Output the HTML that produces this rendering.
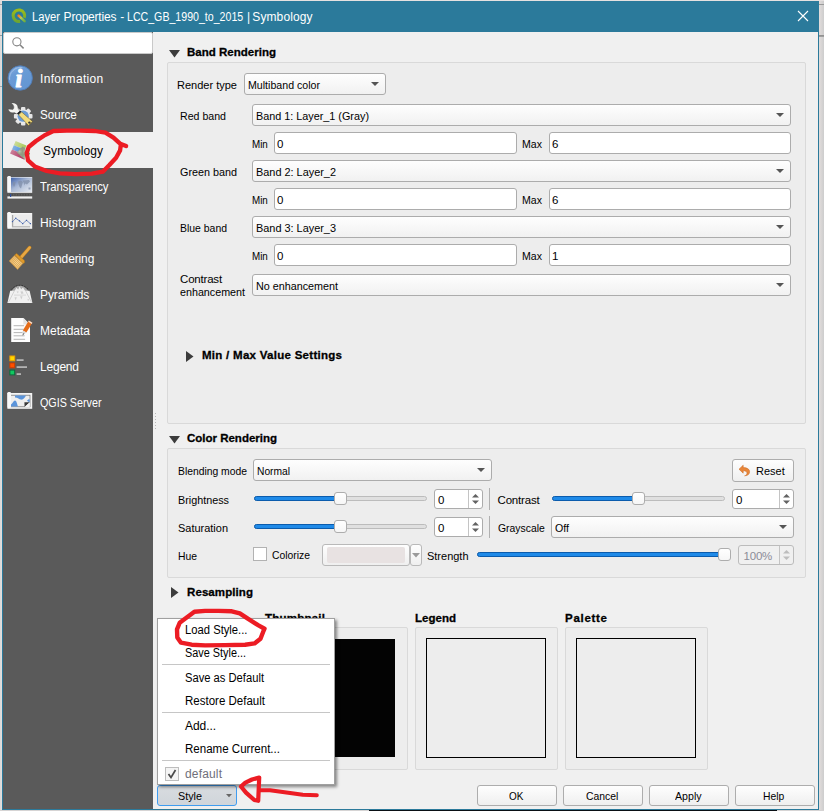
<!DOCTYPE html>
<html lang="en">
<head>
<meta charset="utf-8">
<title>Layer Properties - LCC_GB_1990_to_2015 | Symbology</title>
<style>
html,body{margin:0;padding:0;}
body{width:824px;height:811px;position:relative;overflow:hidden;background:#e4e2e2;font-family:'Liberation Sans',sans-serif;}
div,span.t,svg{position:absolute;box-sizing:border-box;}
span.t{white-space:pre;line-height:20px;height:20px;}
.combo{border:1px solid #acacac;border-radius:3px;background:linear-gradient(#fefefe,#f1f1f1);}
.combo:after{content:"";position:absolute;right:6.5px;top:50%;margin-top:-2px;border:4px solid transparent;border-top:4px solid #555;border-bottom:0;}
.inp{border:1px solid #acacac;border-radius:3px;background:#fff;}
.btn{border:1px solid #adadad;border-radius:3px;background:linear-gradient(#fefefe,#efefef);}
.grp{border:1px solid #d9d9d9;border-radius:2px;background:#ededed;}
.trk{height:5px;border:1px solid #bcbcbc;border-radius:3px;background:#e0e0e0;}
.fill{height:5px;border:1px solid #0b5cad;border-radius:3px;background:#1f8ae8;}
.hnd{width:13px;height:13px;border:1px solid #adadad;border-radius:3px;background:linear-gradient(#ffffff,#f6f6f6);}
.spin{border:1px solid #acacac;border-radius:3px;background:#fff;}
.sep{height:1px;background:#c8c8c8;}
.wg{left:0;top:0;width:0;height:0;font-size:0;}

</style>
</head>
<body>
<div style="left:0px;top:0px;width:824px;height:1px;background:#e6e1e0;"></div>
<div style="left:0px;top:1px;width:2px;height:810px;background:linear-gradient(90deg,#d8d8d8,#e6e0de);"></div>
<div style="left:819px;top:1px;width:5px;height:810px;background:linear-gradient(90deg,#e2dddc,#cdcdcd);"></div>
<div style="left:0px;top:4px;width:2px;height:1px;background:#9a9a9a;"></div>
<div style="left:819px;top:4px;width:5px;height:1px;background:#9a9a9a;"></div>
<div style="left:0px;top:35px;width:2px;height:1px;background:#9a9a9a;"></div>
<div style="left:819px;top:35px;width:5px;height:2px;background:linear-gradient(#8c8c8c,#a4a4a4);"></div>
<div style="left:0px;top:86px;width:2px;height:1px;background:#a8a8a8;"></div>
<div style="left:0px;top:810px;width:824px;height:1px;background:#d6d4d4;"></div>
<div style="left:369px;top:810px;width:408px;height:1px;background:#0a0f14;"></div>
<div style="left:2px;top:1px;width:817px;height:809px;background:#f0f0f0;border:1px solid #2b7a9b;"></div>
<div style="left:2px;top:1px;width:817px;height:31px;background:#2b7a9b;"></div>
<div class="wg"><span class="t" style="left:32.4px;top:7px;font-size:12px;color:#fff;transform:scaleX(0.9324);transform-origin:0 0;">Layer</span> <span class="t" style="left:63.6px;top:7px;font-size:12px;color:#fff;letter-spacing:-0.211px;">Properties</span> <span class="t" style="left:120.2px;top:7px;font-size:12px;color:#fff;">-</span> <span class="t" style="left:127.3px;top:7px;font-size:12px;color:#fff;transform:scaleX(0.8841);transform-origin:0 0;">LCC_GB_1990_to_2015</span> <span class="t" style="left:247px;top:7px;font-size:12px;color:#fff;">|</span> <span class="t" style="left:252.3px;top:7px;font-size:12px;color:#fff;letter-spacing:0.103px;">Symbology</span></div>
<svg style="left:797px;top:10px" width="12" height="12" viewBox="0 0 12 12"><path d="M1 1L11 11M11 1L1 11" stroke="#fff" stroke-width="1.1" fill="none"/></svg>
<svg style="left:0px;top:0px" width="40" height="32" viewBox="0 0 40 32"><defs><linearGradient id="gq" x1="0" y1="0" x2="0" y2="1"><stop offset="0" stop-color="#9cbb1a"/><stop offset="1" stop-color="#6ea531"/></linearGradient><linearGradient id="gp" gradientUnits="userSpaceOnUse" x1="18" y1="15" x2="25.5" y2="22"><stop offset="0" stop-color="#ff7410"/><stop offset="0.22" stop-color="#f39228"/><stop offset="0.4" stop-color="#c3cc52"/><stop offset="0.6" stop-color="#8fbf4a"/><stop offset="1" stop-color="#68a83c"/></linearGradient></defs><path d="M24.3 17.9A5.8 5.8 0 1 0 20.1 21.4" fill="none" stroke="url(#gq)" stroke-width="3"/><path d="M18.6 15.6L24.6 21.1" stroke="url(#gp)" stroke-width="2.6" stroke-linecap="round"/></svg>
<div style="left:3px;top:32px;width:150px;height:777px;background:#5a5a5a;"></div>
<div style="left:3px;top:32px;width:150px;height:22px;background:#fff;border:1px solid #c9c9c9;border-radius:2px;"></div>
<svg style="left:11px;top:36px" width="14" height="14" viewBox="0 0 14 14"><circle cx="5.9" cy="5.8" r="4.1" stroke="#858585" stroke-width="1.1" fill="none"/><path d="M8.9 8.8L12.6 12.4" stroke="#858585" stroke-width="1.5" fill="none"/></svg>
<span class="t" style="left:40px;top:69px;font-size:12px;color:#fff;letter-spacing:0.317px;">Information</span>
<svg style="left:0px;top:60px" width="40" height="36" viewBox="0 0 40 36"><defs><linearGradient id="gi" x1="0" y1="0" x2="0.6" y2="1"><stop offset="0" stop-color="#8db4e2"/><stop offset="0.35" stop-color="#6b9cd6"/><stop offset="1" stop-color="#6496d2"/></linearGradient></defs><circle cx="20.2" cy="18" r="12.2" fill="url(#gi)" stroke="#4f7db8" stroke-width="0.9"/><path d="M9.6 19.5A10.6 10.6 0 0 1 22 7.6" fill="none" stroke="#a9c6ea" stroke-width="1" stroke-linecap="round" opacity="0.8"/><text x="15.2" y="26.6" font-family="'Liberation Serif',serif" font-style="italic" font-weight="bold" font-size="25.5" fill="#fff" stroke="#fff" stroke-width="0.9" stroke-linejoin="round">i</text></svg>
<span class="t" style="left:40px;top:105px;font-size:12px;color:#fff;transform:scaleX(0.9676);transform-origin:0 0;">Source</span>
<svg style="left:0px;top:96px" width="40" height="36" viewBox="0 0 40 36"><g transform="translate(23.2,20.2)"><rect x="-2.2" y="-9.3" width="4.4" height="5" rx="1" fill="#e6e6e6" transform="rotate(0)"/><rect x="-2.2" y="-9.3" width="4.4" height="5" rx="1" fill="#e6e6e6" transform="rotate(45)"/><rect x="-2.2" y="-9.3" width="4.4" height="5" rx="1" fill="#e6e6e6" transform="rotate(90)"/><rect x="-2.2" y="-9.3" width="4.4" height="5" rx="1" fill="#e6e6e6" transform="rotate(135)"/><rect x="-2.2" y="-9.3" width="4.4" height="5" rx="1" fill="#e6e6e6" transform="rotate(180)"/><rect x="-2.2" y="-9.3" width="4.4" height="5" rx="1" fill="#e6e6e6" transform="rotate(225)"/><rect x="-2.2" y="-9.3" width="4.4" height="5" rx="1" fill="#e6e6e6" transform="rotate(270)"/><rect x="-2.2" y="-9.3" width="4.4" height="5" rx="1" fill="#e6e6e6" transform="rotate(315)"/><circle r="7" fill="#e9e9e9"/><circle r="5.6" fill="#6b9cd6"/></g><path d="M11.2 7.2C15 6 18.2 8.6 18 12.2L19.8 15.4L17.2 18L14.2 16.6C11.2 17.6 8.6 15.6 8.2 13L12.8 13.6C14.6 12 14.2 9 11.2 7.2Z" fill="#f4f4f2" stroke="#4a4a4a" stroke-width="0.4"/><path d="M17 17.4L20.2 14.6L21.4 15.8L18.4 18.8Z" fill="#1f1f1f"/><path d="M18.6 18.9L21.6 15.9L32.4 25.4L28.6 29.6Z" fill="#f3dc7c" stroke="#6b5a1e" stroke-width="0.5"/><circle cx="29.4" cy="26.6" r="1.2" fill="#3a3a3a"/></svg>
<div style="left:3px;top:132px;width:151px;height:36px;background:#f0f0f0;"></div>
<span class="t" style="left:43px;top:141px;font-size:12px;color:#000;letter-spacing:0.078px;">Symbology</span>
<svg style="left:0px;top:132px" width="40" height="36" viewBox="0 0 40 36"><defs><pattern id="hx" width="1.2" height="1.2" patternUnits="userSpaceOnUse"><rect width="1.2" height="1.2" fill="#8f9a80"/><rect width="0.6" height="0.6" fill="#b9c0ad"/></pattern><linearGradient id="sg" x1="0" y1="0" x2="1" y2="0.4"><stop offset="0" stop-color="#d3dfa0"/><stop offset="1" stop-color="#a9c95c"/></linearGradient><linearGradient id="sb" x1="0" y1="0" x2="1" y2="0.4"><stop offset="0" stop-color="#8fb8e6"/><stop offset="1" stop-color="#4a8fd8"/></linearGradient><linearGradient id="sp" x1="0" y1="0" x2="1" y2="0.4"><stop offset="0" stop-color="#cf8aa2"/><stop offset="1" stop-color="#b03a64"/></linearGradient></defs><path d="M15.6 9L26.4 13.6L24.8 17.8L13.8 13.2Z" fill="url(#sg)"/><path d="M13.8 13.2L24.8 17.8L23.4 22.2L12 17.6Z" fill="url(#sb)"/><path d="M12 17.6L23.4 22.2L24.6 27.8L10 21.4Z" fill="url(#sp)"/><path d="M22.4 14.4L25.2 15.6L25 27.8L16.8 20.6Z" fill="url(#hx)"/><path d="M28.4 19.6L30 21.4L29.4 23.2Z" fill="#7a8a4a"/></svg>
<span class="t" style="left:40px;top:177px;font-size:12px;color:#fff;transform:scaleX(0.9394);transform-origin:0 0;">Transparency</span>
<svg style="left:0px;top:168px" width="40" height="36" viewBox="0 0 40 36"><defs><linearGradient id="gt" x1="0" y1="0" x2="1" y2="1"><stop offset="0" stop-color="#3f62ab"/><stop offset="0.45" stop-color="#a9b9d6"/><stop offset="1" stop-color="#e9edf2"/></linearGradient></defs><rect x="7.4" y="9" width="24.8" height="15.8" fill="#f4f4f4"/><rect x="11" y="9.6" width="21" height="14.6" fill="url(#gt)"/><rect x="7.4" y="8" width="3.6" height="16" rx="1.2" fill="#f7f7f7"/><path d="M18 13.5L21 12.5L23 14L22 17L21 20.5L19.5 19L18.5 16Z M13 14L15.5 14L15 17L14 19L12.8 16.5Z M22.5 12.5L29 12L30 13.5L27 16.5L25 15.5L24.5 17.5L23.5 14.5Z M28.5 19.5L30.5 19.5L30.5 21.5L28.5 21.5Z" fill="#7f8ea8" opacity="0.75"/><rect x="7.4" y="26" width="24.8" height="1.6" fill="#4a4a4a"/><rect x="8.2" y="26.2" width="0.8" height="1.2" fill="#6c6c6c"/><rect x="9.799999999999999" y="26.2" width="0.8" height="1.2" fill="#6c6c6c"/><rect x="11.399999999999999" y="26.2" width="0.8" height="1.2" fill="#6c6c6c"/><rect x="13.0" y="26.2" width="0.8" height="1.2" fill="#6c6c6c"/><rect x="14.6" y="26.2" width="0.8" height="1.2" fill="#6c6c6c"/><rect x="16.2" y="26.2" width="0.8" height="1.2" fill="#6c6c6c"/><rect x="17.8" y="26.2" width="0.8" height="1.2" fill="#6c6c6c"/><rect x="19.4" y="26.2" width="0.8" height="1.2" fill="#6c6c6c"/><rect x="21.0" y="26.2" width="0.8" height="1.2" fill="#6c6c6c"/><rect x="22.6" y="26.2" width="0.8" height="1.2" fill="#6c6c6c"/><rect x="24.2" y="26.2" width="0.8" height="1.2" fill="#6c6c6c"/><rect x="25.8" y="26.2" width="0.8" height="1.2" fill="#6c6c6c"/><rect x="27.400000000000002" y="26.2" width="0.8" height="1.2" fill="#6c6c6c"/><rect x="29.0" y="26.2" width="0.8" height="1.2" fill="#6c6c6c"/><rect x="30.6" y="26.2" width="0.8" height="1.2" fill="#6c6c6c"/><rect x="7.4" y="28.4" width="24.8" height="2.2" fill="#f0f0f0"/><rect x="10" y="26" width="1.2" height="3" fill="#2b4fa0"/></svg>
<span class="t" style="left:40px;top:213px;font-size:12px;color:#fff;letter-spacing:0.202px;">Histogram</span>
<svg style="left:0px;top:204px" width="40" height="36" viewBox="0 0 40 36"><rect x="7.4" y="9" width="24.8" height="15.8" fill="#f4f4f4"/><rect x="11.4" y="10.4" width="20.2" height="12.8" fill="#ececec"/><rect x="7.4" y="8" width="3.6" height="16" rx="1.2" fill="#f8f8f8"/><rect x="12" y="11" width="1.2" height="12" fill="#a9a9a9"/><rect x="12" y="22.2" width="18" height="1.2" fill="#b4b4b4"/><path d="M12.5 17.6L15.7 14.3L19.5 16.9L22.7 19.6L26.5 16.4L30.4 19.6" fill="none" stroke="#4d6cb0" stroke-width="0.7"/><rect x="11.9" y="17.0" width="1.2" height="1.2" fill="#3f5ea8"/><rect x="15.1" y="13.700000000000001" width="1.2" height="1.2" fill="#3f5ea8"/><rect x="18.9" y="16.299999999999997" width="1.2" height="1.2" fill="#3f5ea8"/><rect x="22.099999999999998" y="19.0" width="1.2" height="1.2" fill="#3f5ea8"/><rect x="25.9" y="15.799999999999999" width="1.2" height="1.2" fill="#3f5ea8"/><rect x="29.799999999999997" y="19.0" width="1.2" height="1.2" fill="#3f5ea8"/></svg>
<span class="t" style="left:40px;top:249px;font-size:12px;color:#fff;letter-spacing:-0.134px;">Rendering</span>
<svg style="left:0px;top:240px" width="40" height="36" viewBox="0 0 40 36"><defs><pattern id="hb" width="1.3" height="1.3" patternUnits="userSpaceOnUse" patternTransform="rotate(45)"><rect width="1.3" height="1.3" fill="#e2ab55"/><rect width="0.7" height="0.7" fill="#f4d9a0"/></pattern></defs><path d="M29.6 7.6L21.6 16.8" stroke="#b57a1e" stroke-width="3.6" stroke-linecap="round"/><path d="M29.6 7.6L21.6 16.8" stroke="#e8a844" stroke-width="2.6" stroke-linecap="round"/><path d="M14.6 15L16.6 13.4L24.4 20.4L24.6 22.6L23 23.4Z" fill="#e09a2a" stroke="#b07618" stroke-width="0.5"/><path d="M14.4 15.4L23 23.2L17.6 29.6L9.2 21Z" fill="url(#hb)" stroke="#c98f34" stroke-width="0.5"/></svg>
<span class="t" style="left:40px;top:285px;font-size:12px;color:#fff;letter-spacing:-0.102px;">Pyramids</span>
<svg style="left:0px;top:276px" width="40" height="36" viewBox="0 0 40 36"><path d="M11.6 14.9C13.6 11.6 16.8 9.7 19.8 9.7C22.8 9.7 26 11.6 28.2 14.9Z" fill="#a9a9a9"/><path d="M11.2 13.6C13.6 10.8 16.8 9.2 19.8 9.2C22.8 9.2 26 10.8 28.6 13.6" fill="none" stroke="#2b2b2b" stroke-width="0.8" stroke-dasharray="1.6 1.3"/><path d="M14.6 14.9L16.4 11.8L18.2 13.4L19.6 10.6L21.2 13.2L23 11.6L25.2 14.9Z" fill="#ededed"/><path d="M10.2 14.8L29.6 14.8L32.4 27L7.4 27Z" fill="#f1f1f1"/><path d="M14 19.1L26 19.1" stroke="#cfcfcf" stroke-width="0.8"/><path d="M14.4 14.8L8.4 26.4M25.6 14.8L31.6 26.4" stroke="#c4c4c4" stroke-width="0.7" fill="none"/><path d="M16.6 15.4L18.6 15.2L18 17.6ZM20.4 15.6L22.6 15.2L23.6 17.4L21.4 18ZM14.5 21.2L16.8 21.2L15.6 24.6ZM20 20.2L22.6 20.2L21.4 23.6ZM27.4 22.8L29.2 23.4L28 25.2Z" fill="#cfcfcf"/></svg>
<span class="t" style="left:40px;top:321px;font-size:12px;color:#fff;letter-spacing:-0.007px;">Metadata</span>
<svg style="left:0px;top:312px" width="40" height="36" viewBox="0 0 40 36"><path d="M11.2 6H23.4L30 12.6V30H11.2Z" fill="#fdfdfd"/><path d="M23.4 6V12.6H30Z" fill="#e4e4e4"/><rect x="13.6" y="13.2" width="10.5" height="1" fill="#b5b5b5"/><rect x="13.6" y="16.8" width="10" height="1" fill="#b5b5b5"/><rect x="13.6" y="20.1" width="9" height="1" fill="#b5b5b5"/><rect x="13.6" y="23.3" width="11" height="1" fill="#b5b5b5"/><rect x="13.6" y="26.8" width="11.5" height="1" fill="#b5b5b5"/><path d="M28.8 8.6L32.4 10.8L26.4 20.6L22.8 18.4Z" fill="#e56d1a"/><path d="M28.8 8.6L32.4 10.8L31.8 11.9L28.2 9.7Z" fill="#f3e3d6"/><path d="M22.8 18.4L26.4 20.6L22.2 23.8Z" fill="#d8d8d8"/><path d="M23.4 21.2L24.4 21.8L22.2 23.8Z" fill="#4a4a4a"/></svg>
<span class="t" style="left:40px;top:357px;font-size:12px;color:#fff;letter-spacing:-0.209px;">Legend</span>
<svg style="left:0px;top:348px" width="40" height="36" viewBox="0 0 40 36"><rect x="9.9" y="8" width="4.8" height="4.8" fill="#ffd800" stroke="#f0a000" stroke-width="1"/><rect x="9.9" y="15" width="4.8" height="4.8" fill="#ff5000" stroke="#cc3c00" stroke-width="1"/><rect x="9.9" y="22.1" width="4.8" height="4.8" fill="#10c860" stroke="#0d6a3c" stroke-width="1"/><rect x="16.6" y="11.2" width="7" height="1.8" fill="#b3b3b3"/><rect x="16.6" y="18.2" width="10.4" height="1.8" fill="#b3b3b3"/><rect x="16.6" y="25.2" width="4.4" height="1.8" fill="#b3b3b3"/></svg>
<span class="t" style="left:40px;top:393px;font-size:12px;color:#fff;transform:scaleX(0.8954);transform-origin:0 0;">QGIS Server</span>
<svg style="left:0px;top:384px" width="40" height="36" viewBox="0 0 40 36"><rect x="7.4" y="9" width="24.8" height="15.8" fill="#f4f4f4"/><rect x="10.6" y="11.2" width="19.4" height="11.6" fill="#eeeeee" stroke="#6a6a6a" stroke-width="0.7"/><path d="M15 11.6H26C25 14 23 16 21 15.6C19 15.2 18 13.6 15 13.4Z" fill="#5b94da"/><path d="M11 22.4V20.6C12.6 19.6 13.4 16.6 15 16.6C16.8 16.6 17 20.4 18 22.4Z" fill="#5b94da"/><path d="M27 16.8C27.6 15.4 28.8 15 29.6 15.2V18.6Z" fill="#5b94da"/><path d="M24.4 18.2L29.8 18.2L24.6 23Z" fill="#3a3a3a"/><path d="M29.8 18.2V23H24.6Z" fill="#f4f4f4"/><rect x="7.4" y="8" width="3.6" height="16" rx="1.2" fill="#f8f8f8"/></svg>
<div style="left:155px;top:413px;width:1px;height:1px;background:#b8b8b8;"></div>
<div style="left:155px;top:416px;width:1px;height:1px;background:#b8b8b8;"></div>
<div style="left:155px;top:419px;width:1px;height:1px;background:#b8b8b8;"></div>
<div style="left:155px;top:422px;width:1px;height:1px;background:#b8b8b8;"></div>
<div style="left:155px;top:425px;width:1px;height:1px;background:#b8b8b8;"></div>
<div style="left:155px;top:428px;width:1px;height:1px;background:#b8b8b8;"></div>
<svg style="left:168.5px;top:50px" width="11" height="8" viewBox="0 0 11 8"><path d="M0 0H11L5.5 7.5Z" fill="#3c3c3c"/></svg>
<span class="t" style="left:187px;top:42px;font-size:11.5px;color:#000;font-weight:700;letter-spacing:0.014px;-webkit-text-stroke:0.3px #000;">Band Rendering</span>
<div class="grp" style="left:167px;top:62px;width:639px;height:362px;"></div>
<span class="t" style="left:177px;top:75px;font-size:11.5px;color:#000;transform:scaleX(0.9576);transform-origin:0 0;">Render type</span>
<div class="combo" style="left:244px;top:73px;width:142px;height:22px;"></div>
<span class="t" style="left:248px;top:75px;font-size:11.5px;color:#000;transform:scaleX(0.9233);transform-origin:0 0;">Multiband color</span>
<span class="t" style="left:180.2px;top:106px;font-size:11.5px;color:#000;transform:scaleX(0.9223);transform-origin:0 0;">Red band</span>
<div class="combo" style="left:252px;top:104px;width:539px;height:22px;"></div>
<span class="t" style="left:256px;top:106px;font-size:11.5px;color:#000;transform:scaleX(0.9403);transform-origin:0 0;">Band 1: Layer_1 (Gray)</span>
<span class="t" style="left:251.7px;top:134px;font-size:11.5px;color:#000;transform:scaleX(0.8526);transform-origin:0 0;">Min</span>
<div class="inp" style="left:274px;top:132px;width:243px;height:22px;"></div>
<span class="t" style="left:277px;top:134px;font-size:11.5px;color:#000;">0</span>
<span class="t" style="left:522px;top:134px;font-size:11.5px;color:#000;transform:scaleX(0.9202);transform-origin:0 0;">Max</span>
<div class="inp" style="left:549px;top:132px;width:242px;height:22px;"></div>
<span class="t" style="left:552px;top:134px;font-size:11.5px;color:#000;">6</span>
<span class="t" style="left:180.2px;top:162px;font-size:11.5px;color:#000;transform:scaleX(0.9383);transform-origin:0 0;">Green band</span>
<div class="combo" style="left:252px;top:160px;width:539px;height:22px;"></div>
<span class="t" style="left:256px;top:162px;font-size:11.5px;color:#000;transform:scaleX(0.9478);transform-origin:0 0;">Band 2: Layer_2</span>
<span class="t" style="left:251.7px;top:190px;font-size:11.5px;color:#000;transform:scaleX(0.8526);transform-origin:0 0;">Min</span>
<div class="inp" style="left:274px;top:188px;width:243px;height:22px;"></div>
<span class="t" style="left:277px;top:190px;font-size:11.5px;color:#000;">0</span>
<span class="t" style="left:522px;top:190px;font-size:11.5px;color:#000;transform:scaleX(0.9202);transform-origin:0 0;">Max</span>
<div class="inp" style="left:549px;top:188px;width:242px;height:22px;"></div>
<span class="t" style="left:552px;top:190px;font-size:11.5px;color:#000;">6</span>
<span class="t" style="left:180.2px;top:218px;font-size:11.5px;color:#000;transform:scaleX(0.9074);transform-origin:0 0;">Blue band</span>
<div class="combo" style="left:252px;top:216px;width:539px;height:22px;"></div>
<span class="t" style="left:256px;top:218px;font-size:11.5px;color:#000;transform:scaleX(0.9478);transform-origin:0 0;">Band 3: Layer_3</span>
<span class="t" style="left:251.7px;top:246px;font-size:11.5px;color:#000;transform:scaleX(0.8526);transform-origin:0 0;">Min</span>
<div class="inp" style="left:274px;top:244px;width:243px;height:22px;"></div>
<span class="t" style="left:277px;top:246px;font-size:11.5px;color:#000;">0</span>
<span class="t" style="left:522px;top:246px;font-size:11.5px;color:#000;transform:scaleX(0.9202);transform-origin:0 0;">Max</span>
<div class="inp" style="left:549px;top:244px;width:242px;height:22px;"></div>
<span class="t" style="left:552px;top:246px;font-size:11.5px;color:#000;">1</span>
<span class="t" style="left:180.1px;top:269px;font-size:11.5px;color:#000;letter-spacing:-0.21px;">Contrast</span>
<span class="t" style="left:180.1px;top:282px;font-size:11.5px;color:#000;transform:scaleX(0.9325);transform-origin:0 0;">enhancement</span>
<div class="combo" style="left:252px;top:274px;width:539px;height:22px;"></div>
<span class="t" style="left:256px;top:276px;font-size:11.5px;color:#000;transform:scaleX(0.9361);transform-origin:0 0;">No enhancement</span>
<svg style="left:186px;top:351px" width="8" height="11" viewBox="0 0 8 11"><path d="M0 0V11L7.5 5.5Z" fill="#3c3c3c"/></svg>
<span class="t" style="left:202px;top:345px;font-size:11.5px;color:#000;font-weight:700;letter-spacing:0.28px;-webkit-text-stroke:0.3px #000;">Min / Max Value Settings</span>
<svg style="left:168.5px;top:436px" width="11" height="8" viewBox="0 0 11 8"><path d="M0 0H11L5.5 7.5Z" fill="#3c3c3c"/></svg>
<span class="t" style="left:187px;top:428px;font-size:11.5px;color:#000;font-weight:700;letter-spacing:-0.007px;-webkit-text-stroke:0.3px #000;">Color Rendering</span>
<div class="grp" style="left:167px;top:448px;width:639px;height:130px;"></div>
<span class="t" style="left:177.5px;top:461px;font-size:11.5px;color:#000;transform:scaleX(0.8992);transform-origin:0 0;">Blending mode</span>
<div class="combo" style="left:253px;top:459px;width:239px;height:22px;"></div>
<span class="t" style="left:257px;top:461px;font-size:11.5px;color:#000;transform:scaleX(0.8904);transform-origin:0 0;">Normal</span>
<div class="btn" style="left:732px;top:459px;width:62px;height:23px;"></div>
<svg style="left:738px;top:464px" width="13" height="13" viewBox="0 0 13 13"><path d="M5.2 1.2L1 5.2L5.2 9.2V6.8C7.6 6.6 9 7.6 9 9.2C9 10.4 8.2 11.4 6.6 11.8C10 11.8 11.6 10 11.6 7.8C11.6 5.4 9.4 3.6 5.2 3.6Z" fill="#e8863a" stroke="#c9651c" stroke-width="0.5"/></svg>
<span class="t" style="left:756.3px;top:461px;font-size:11.5px;color:#000;transform:scaleX(0.9552);transform-origin:0 0;">Reset</span>
<span class="t" style="left:177.5px;top:490px;font-size:11.5px;color:#000;transform:scaleX(0.9385);transform-origin:0 0;">Brightness</span>
<div class="trk" style="left:254px;top:496px;width:173px;height:5px;"></div>
<div class="fill" style="left:254px;top:496px;width:83px;height:5px;"></div>
<div class="hnd" style="left:334px;top:492px;width:13px;height:13px;"></div>
<div class="spin" style="left:434px;top:489px;width:49px;height:20px;"></div>
<span class="t" style="left:438px;top:490px;font-size:11.5px;color:#000;">0</span>
<div style="left:468px;top:490px;width:1px;height:18px;background:#c4c4c4;"></div>
<svg style="left:471px;top:493px" width="9" height="12" viewBox="0 0 9 12"><path d="M1 4.6L4.5 0.9L8 4.6Z" fill="#626262"/><path d="M1 7.4L4.5 11.1L8 7.4Z" fill="#626262"/></svg>
<div style="left:489px;top:488px;width:1px;height:22px;background:#b0b0b0;"></div>
<span class="t" style="left:497.5px;top:490px;font-size:11.5px;color:#000;letter-spacing:-0.167px;">Contrast</span>
<div class="trk" style="left:552px;top:496px;width:173px;height:5px;"></div>
<div class="fill" style="left:552px;top:496px;width:83px;height:5px;"></div>
<div class="hnd" style="left:632px;top:492px;width:13px;height:13px;"></div>
<div class="spin" style="left:732px;top:489px;width:62px;height:20px;"></div>
<span class="t" style="left:736px;top:490px;font-size:11.5px;color:#000;">0</span>
<div style="left:779px;top:490px;width:1px;height:18px;background:#c4c4c4;"></div>
<svg style="left:782px;top:493px" width="9" height="12" viewBox="0 0 9 12"><path d="M1 4.6L4.5 0.9L8 4.6Z" fill="#626262"/><path d="M1 7.4L4.5 11.1L8 7.4Z" fill="#626262"/></svg>
<span class="t" style="left:177.5px;top:518px;font-size:11.5px;color:#000;transform:scaleX(0.9535);transform-origin:0 0;">Saturation</span>
<div class="trk" style="left:254px;top:524px;width:173px;height:5px;"></div>
<div class="fill" style="left:254px;top:524px;width:83px;height:5px;"></div>
<div class="hnd" style="left:334px;top:520px;width:13px;height:13px;"></div>
<div class="spin" style="left:434px;top:517px;width:49px;height:20px;"></div>
<span class="t" style="left:438px;top:518px;font-size:11.5px;color:#000;">0</span>
<div style="left:468px;top:518px;width:1px;height:18px;background:#c4c4c4;"></div>
<svg style="left:471px;top:521px" width="9" height="12" viewBox="0 0 9 12"><path d="M1 4.6L4.5 0.9L8 4.6Z" fill="#626262"/><path d="M1 7.4L4.5 11.1L8 7.4Z" fill="#626262"/></svg>
<div style="left:489px;top:516px;width:1px;height:22px;background:#b0b0b0;"></div>
<span class="t" style="left:497.5px;top:518px;font-size:11.5px;color:#000;transform:scaleX(0.9038);transform-origin:0 0;">Grayscale</span>
<div class="combo" style="left:551px;top:516px;width:243px;height:22px;"></div>
<span class="t" style="left:555px;top:518px;font-size:11.5px;color:#000;transform:scaleX(0.9247);transform-origin:0 0;">Off</span>
<span class="t" style="left:177.5px;top:546px;font-size:11.5px;color:#000;transform:scaleX(0.9001);transform-origin:0 0;">Hue</span>
<div style="left:253px;top:547px;width:14px;height:14px;background:#fff;border:1px solid #b2b2b2;"></div>
<span class="t" style="left:271.5px;top:545.2px;font-size:11.5px;color:#000;transform:scaleX(0.9007);transform-origin:0 0;">Colorize</span>
<div class="btn" style="left:322px;top:544px;width:88px;height:22px;border-color:#b9b9b9;"></div>
<div style="left:327px;top:547px;width:78px;height:16px;background:#e8e2e2;border-radius:2px;"></div>
<div class="btn" style="left:410px;top:544px;width:12px;height:22px;border-color:#b9b9b9;"></div>
<svg style="left:412px;top:553px" width="8" height="5" viewBox="0 0 8 5"><path d="M0 0H8L4 4.5Z" fill="#9a9a9a"/></svg>
<span class="t" style="left:427.2px;top:546px;font-size:11.5px;color:#000;transform:scaleX(0.9544);transform-origin:0 0;">Strength</span>
<div class="trk" style="left:477px;top:552px;width:254px;height:5px;"></div>
<div class="fill" style="left:477px;top:552px;width:244px;height:5px;"></div>
<div class="hnd" style="left:718px;top:548px;width:13px;height:13px;"></div>
<div class="spin" style="left:738px;top:545px;width:56px;height:20px;background:#f0f0f0;border-color:#bcbcbc;"></div>
<span class="t" style="left:743.5px;top:546px;font-size:11.5px;color:#8c8c98;letter-spacing:-0.207px;">100%</span>
<div style="left:779px;top:546px;width:1px;height:18px;background:#c4c4c4;"></div>
<svg style="left:782px;top:549px" width="9" height="12" viewBox="0 0 9 12"><path d="M1 4.6L4.5 0.9L8 4.6Z" fill="#bdbdbd"/><path d="M1 7.4L4.5 11.1L8 7.4Z" fill="#bdbdbd"/></svg>
<svg style="left:171px;top:587px" width="8" height="11" viewBox="0 0 8 11"><path d="M0 0V11L7.5 5.5Z" fill="#3c3c3c"/></svg>
<span class="t" style="left:187px;top:582px;font-size:11.5px;color:#000;font-weight:700;letter-spacing:0.09px;-webkit-text-stroke:0.3px #000;">Resampling</span>
<span class="t" style="left:265px;top:608px;font-size:11.5px;color:#000;font-weight:700;letter-spacing:0.232px;-webkit-text-stroke:0.3px #000;">Thumbnail</span>
<span class="t" style="left:415px;top:608px;font-size:11.5px;color:#000;font-weight:700;letter-spacing:0.022px;-webkit-text-stroke:0.3px #000;">Legend</span>
<span class="t" style="left:565px;top:608px;font-size:11.5px;color:#000;font-weight:700;letter-spacing:0.714px;-webkit-text-stroke:0.3px #000;">Palette</span>
<div class="grp" style="left:265px;top:627px;width:143px;height:143px;"></div>
<div style="left:277px;top:639px;width:118px;height:118px;background:#030303;"></div>
<div class="grp" style="left:415px;top:627px;width:143px;height:143px;"></div>
<div style="left:426px;top:638px;width:120px;height:120px;border:1px solid #000;background:#ededed;"></div>
<div class="grp" style="left:565px;top:627px;width:143px;height:143px;"></div>
<div style="left:576px;top:638px;width:120px;height:120px;border:1px solid #000;background:#ededed;"></div>
<div class="btn" style="left:477px;top:785px;width:80px;height:21px;"></div>
<span class="t" style="left:509.3px;top:786px;font-size:11.5px;color:#000;transform:scaleX(0.8662);transform-origin:0 0;">OK</span>
<div class="btn" style="left:563px;top:785px;width:80px;height:21px;"></div>
<span class="t" style="left:586.3px;top:786px;font-size:11.5px;color:#000;transform:scaleX(0.9019);transform-origin:0 0;">Cancel</span>
<div class="btn" style="left:649px;top:785px;width:80px;height:21px;"></div>
<span class="t" style="left:674.6px;top:786px;font-size:11.5px;color:#000;transform:scaleX(0.9242);transform-origin:0 0;">Apply</span>
<div class="btn" style="left:735px;top:785px;width:80px;height:21px;"></div>
<span class="t" style="left:762.8px;top:786px;font-size:11.5px;color:#000;transform:scaleX(0.9004);transform-origin:0 0;">Help</span>
<div style="left:157px;top:785px;width:80px;height:21px;border:1px solid #3f9cf0;border-radius:3px;background:linear-gradient(#d8dce0,#d0d5da);"></div>
<span class="t" style="left:178px;top:786px;font-size:11.5px;color:#000;transform:scaleX(0.9383);transform-origin:0 0;">Style</span>
<svg style="left:226px;top:794px" width="6" height="4" viewBox="0 0 6 4"><path d="M0 0H6L3 3.2Z" fill="#666"/></svg>
<div style="left:157px;top:618px;width:178px;height:167px;background:#fff;border:1px solid #a0a0a0;box-shadow:2px 2px 3px rgba(0,0,0,0.45);"></div>
<span class="t" style="left:185px;top:620px;font-size:12px;color:#000;transform:scaleX(0.9368);transform-origin:0 0;">Load Style...</span>
<span class="t" style="left:185px;top:643px;font-size:12px;color:#000;transform:scaleX(0.9054);transform-origin:0 0;">Save Style...</span>
<span class="t" style="left:185px;top:668px;font-size:12px;color:#000;transform:scaleX(0.9325);transform-origin:0 0;">Save as Default</span>
<span class="t" style="left:185px;top:691px;font-size:12px;color:#000;transform:scaleX(0.9595);transform-origin:0 0;">Restore Default</span>
<span class="t" style="left:185px;top:716px;font-size:12px;color:#000;letter-spacing:-0.072px;">Add...</span>
<span class="t" style="left:185px;top:739px;font-size:12px;color:#000;transform:scaleX(0.9623);transform-origin:0 0;">Rename Current...</span>
<div style="left:162px;top:664px;width:168px;height:1px;background:#c6c6c6;"></div>
<div style="left:162px;top:712px;width:168px;height:1px;background:#c6c6c6;"></div>
<div style="left:162px;top:760px;width:168px;height:1px;background:#c6c6c6;"></div>
<div style="left:165px;top:767px;width:14px;height:14px;background:#f4f4f4;border:1px solid #bdbdbd;"></div>
<svg style="left:167px;top:769px" width="10" height="10" viewBox="0 0 10 10"><path d="M1.5 5L4 8.5L8.5 1" stroke="#4a4a4a" stroke-width="1.7" fill="none"/></svg>
<span class="t" style="left:185px;top:764px;font-size:12px;color:#6f6f7a;letter-spacing:0.161px;">default</span>
<svg style="left:0;top:0" width="824" height="811" viewBox="0 0 824 811"><path d="M126.1 146.1L120.1 143.7L113.5 137.7L105.4 132.7L94.8 131L80.1 130.6L66.7 130.6L53.4 131L44 135.7L36 141L28.7 147L26.7 153L28 160.4L34.7 166.4L46.7 171L60 173.3L76 174.1L92.1 173.7L102.8 171.7L109.4 165L116.1 157.7L120.1 150.4L120.8 145" fill="none" stroke="#ec1c24" stroke-width="4.3" stroke-linecap="round" stroke-linejoin="round"/><path d="M264.5 628.7L258.5 625.4L247.8 618.7L239.8 613.4L231.8 611.3L218.4 610.9L205.1 610.9L194.4 611.7L190.4 614.7L185 618.7L179.7 622.7L177 629.4L177.3 637.4L181 642.7L191.7 644.7L205.1 645.4L225.1 645.1L245.1 644.7L254.5 643.4L260.5 638.7L263.1 632L264.5 628.7" fill="none" stroke="#ec1c24" stroke-width="4.4" stroke-linecap="round" stroke-linejoin="round"/><path d="M316.8 795.2L302.8 794.8L284.6 792.2L270 790.2L260.3 790.2" fill="none" stroke="#ec1c24" stroke-width="4" stroke-linecap="round" stroke-linejoin="round"/><path d="M259.2 777.6L252 779.5L245.4 782.6L241 786.5L246 792.6L254.3 800L258.2 800.8L259.2 777.6" fill="none" stroke="#ec1c24" stroke-width="4.2" stroke-linecap="round" stroke-linejoin="round"/></svg>
</body>
</html>
